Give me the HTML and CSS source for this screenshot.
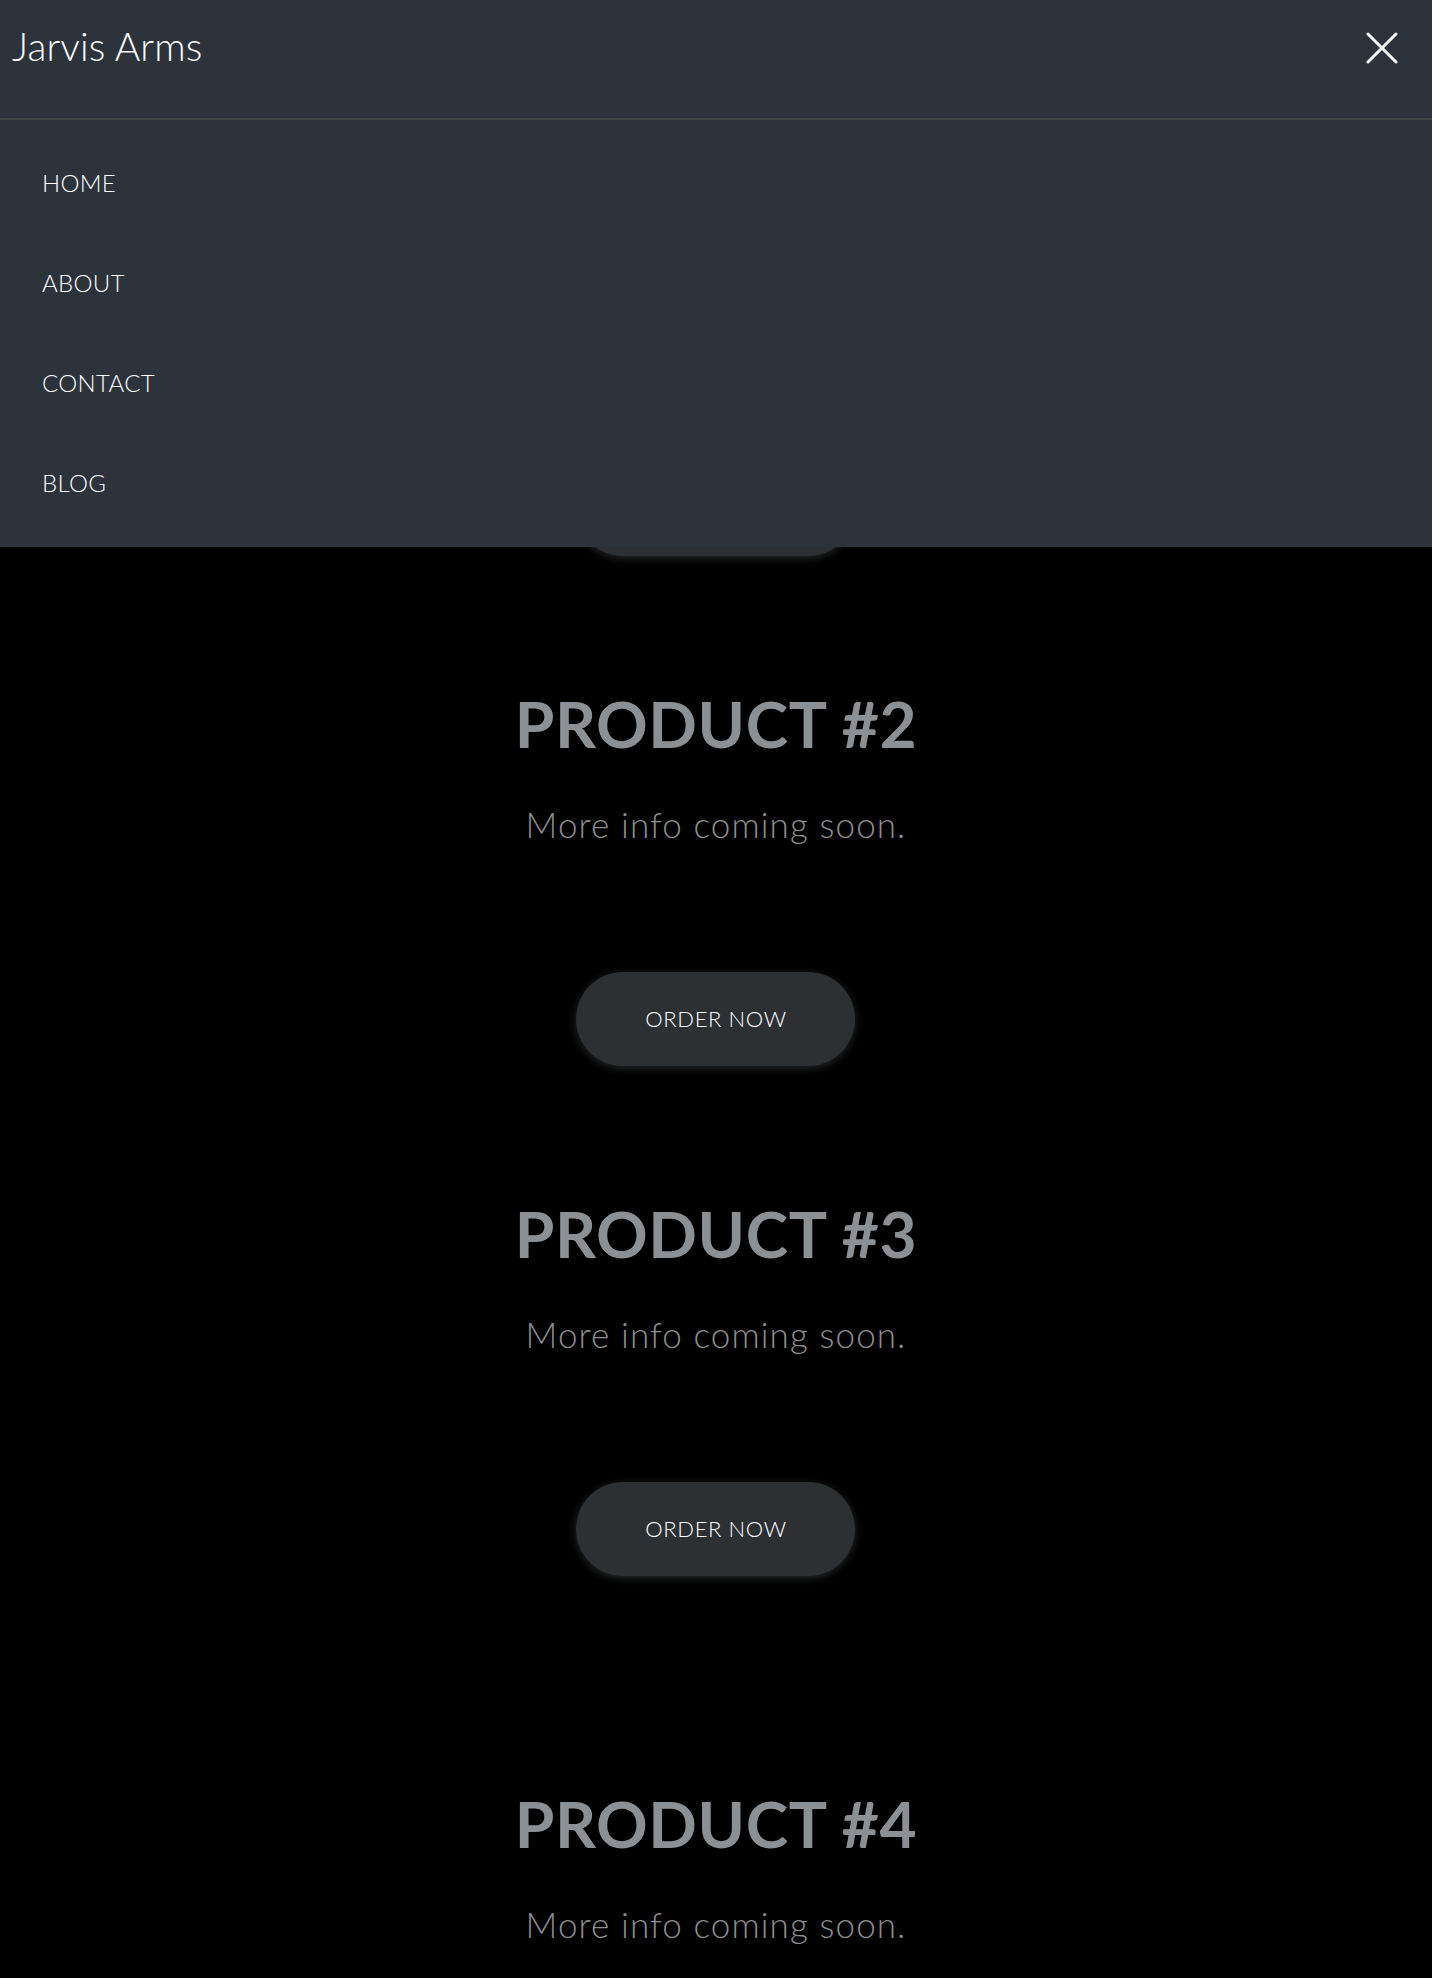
FILE: index.html
```html
<!DOCTYPE html>
<html lang="en">
<head>
<meta charset="utf-8">
<title>Jarvis Arms</title>
<link rel="stylesheet" href="styles.css">
</head>
<body>
<header class="topbar">
  <div class="brand">Jarvis Arms</div>
  <button class="close" aria-label="Close menu">
    <svg width="32" height="32" viewBox="0 0 32 32" fill="none" stroke="#ffffff" stroke-width="3" stroke-linecap="round">
      <path d="M2 2 L30 30 M30 2 L2 30"/>
    </svg>
  </button>
</header>
<nav class="menu">
  <a class="menu-item" href="#">HOME</a>
  <a class="menu-item" href="#">ABOUT</a>
  <a class="menu-item" href="#">CONTACT</a>
  <a class="menu-item" href="#">BLOG</a>
</nav>
<main class="products">
  <section class="product">
    <h2 class="product-title">PRODUCT #1</h2>
    <p class="product-text">More info coming soon.</p>
    <a class="order" href="#">ORDER NOW</a>
  </section>
  <section class="product">
    <h2 class="product-title">PRODUCT #2</h2>
    <p class="product-text">More info coming soon.</p>
    <a class="order" href="#">ORDER NOW</a>
  </section>
  <section class="product">
    <h2 class="product-title">PRODUCT #3</h2>
    <p class="product-text">More info coming soon.</p>
    <a class="order" href="#">ORDER NOW</a>
  </section>
  <section class="product product-spaced">
    <h2 class="product-title">PRODUCT #4</h2>
    <p class="product-text">More info coming soon.</p>
  </section>
</main>
</body>
</html>
```

FILE: styles.css
```css
* { box-sizing: border-box; }

html, body {
  margin: 0;
  padding: 0;
  background: #000000;
  font-family: "Lato", "Open Sans", "Liberation Sans", sans-serif;
}

.topbar {
  position: fixed;
  top: 0;
  left: 0;
  right: 0;
  height: 120px;
  background: #2c333a;
  border-bottom: 2px solid #3e4646;
  display: flex;
  justify-content: space-between;
  align-items: flex-start;
  z-index: 10;
}

.brand {
  margin: 22px 0 0 12px;
  font-size: 39px;
  line-height: 48px;
  font-weight: 300;
  color: #ffffff;
  letter-spacing: 0.1px;
}

.close {
  margin: 32px 34px 0 0;
  padding: 0;
  width: 32px;
  height: 32px;
  border: 0;
  background: transparent;
  display: block;
}

.close svg { display: block; }

.menu {
  position: fixed;
  top: 120px;
  left: 0;
  right: 0;
  background: #2c333a;
  padding: 13px 0 14px;
  display: flex;
  flex-direction: column;
  z-index: 9;
}

.menu-item {
  display: block;
  height: 100px;
  line-height: 100px;
  padding-left: 42px;
  font-size: 24px;
  color: #ffffff;
  text-decoration: none;
  font-weight: 300;
  letter-spacing: 0.3px;
}

.products {
  padding-top: 175px;
  padding-bottom: 30px;
  display: flex;
  flex-direction: column;
  align-items: center;
}

.product {
  display: flex;
  flex-direction: column;
  align-items: center;
  text-align: center;
}

.product + .product { margin-top: 129px; }
.product + .product-spaced { margin-top: 209px; }

.product-title {
  margin: 0;
  font-size: 64px;
  line-height: 77px;
  font-weight: 700;
  color: #8b9094;
  letter-spacing: 0.6px;
}

.product-text {
  margin: 41px 0 0;
  font-size: 35px;
  line-height: 42px;
  font-weight: 300;
  color: #8e8e8e;
  letter-spacing: 1.1px;
}

.order {
  margin-top: 127px;
  width: 279px;
  height: 94px;
  border-radius: 47px;
  background: #2d3033;
  box-shadow: 0 2px 8px rgba(70, 72, 74, 0.55);
  color: #ffffff;
  font-size: 22px;
  line-height: 94px;
  font-weight: 300;
  text-decoration: none;
  text-align: center;
  display: block;
  letter-spacing: 0.6px;
}
```
